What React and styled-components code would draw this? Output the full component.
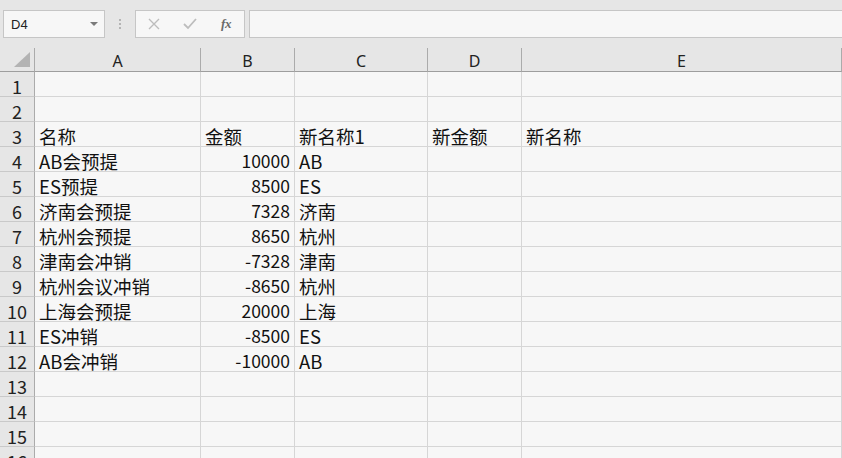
import React from "react";
import styled, { createGlobalStyle } from "styled-components";

const Global = createGlobalStyle`
  html, body { margin: 0; padding: 0; background: #e6e6e6; }
  body { width: 842px; height: 458px; overflow: hidden; font-family: "Noto Sans CJK SC", "Noto Sans", sans-serif; }
  * { box-sizing: border-box; }
`;

const Page = styled.div`
  width: 842px;
  height: 458px;
  overflow: hidden;
  display: flex;
  flex-direction: column;
  background: #e6e6e6;
`;

const Toolbar = styled.div`
  height: 48px;
  flex-shrink: 0;
  display: flex;
  align-items: flex-start;
  padding: 10px 0 0 3px;
`;

const NameBox = styled.div`
  width: 102px;
  height: 28px;
  border: 1px solid #c6c6c6;
  background: #f7f7f7;
  display: flex;
  align-items: center;
  justify-content: space-between;
  padding: 0 6px 0 7px;
  font-family: "Liberation Sans", "Noto Sans", sans-serif;
  font-size: 13px;
  color: #222;
`;

const Caret = styled.span`
  width: 0;
  height: 0;
  border-left: 4px solid transparent;
  border-right: 4px solid transparent;
  border-top: 4px solid #7a7a7a;
`;

const Grip = styled.div`
  width: 30px;
  height: 28px;
  display: flex;
  flex-direction: column;
  align-items: center;
  justify-content: center;
  gap: 2px;
  & > span {
    width: 2px;
    height: 2px;
    background: #b4b4b4;
  }
`;

const Buttons = styled.div`
  width: 110px;
  height: 28px;
  border: 1px solid #c6c6c6;
  background: #f7f7f7;
  display: flex;
  align-items: center;
`;

const IconSlot = styled.div`
  width: 36px;
  height: 26px;
  display: flex;
  align-items: center;
  justify-content: center;
  color: #bdbdbd;
`;

const Fx = styled.span`
  font-family: "Liberation Serif", "DejaVu Serif", serif;
  font-style: italic;
  font-weight: bold;
  font-size: 13px;
  color: #6a6a6a;
  letter-spacing: -0.5px;
`;

const FormulaInput = styled.div`
  margin-left: 4px;
  flex: 1;
  height: 28px;
  border: 1px solid #c6c6c6;
  border-right: none;
  background: #f7f7f7;
`;

const Sheet = styled.div`
  flex: 1;
  min-height: 0;
  display: grid;
  grid-template-columns: 35px 166px 94px 133px 94px 1fr;
  grid-template-rows: 24px;
  grid-auto-rows: 25px;
  background: #f7f7f7;
  overflow: hidden;
`;

const Corner = styled.div`
  background: #e6e6e6;
  border-right: 1px solid #ababab;
  border-bottom: 1px solid #9e9e9e;
  position: relative;
  &::after {
    content: "";
    position: absolute;
    right: 4px;
    bottom: 4px;
    width: 0;
    height: 0;
    border-left: 16px solid transparent;
    border-bottom: 15px solid #b3b3b3;
  }
`;

const ColHead = styled.div`
  background: #e6e6e6;
  border-right: 1px solid #ababab;
  border-bottom: 1px solid #9e9e9e;
  display: flex;
  align-items: center;
  justify-content: center;
  padding-top: 3px;
  font-family: "Noto Sans", sans-serif;
  font-size: 16px;
  color: #222;
`;

const RowHead = styled.div`
  background: #e6e6e6;
  border-right: 1px solid #ababab;
  border-bottom: 1px solid #c9c9c9;
  display: flex;
  align-items: center;
  justify-content: center;
  padding-top: 3px;
  font-size: 18px;
  color: #222;
`;

const Cell = styled.div`
  border-right: 1px solid #d6d6d6;
  border-bottom: 1px solid #d6d6d6;
  display: flex;
  align-items: center;
  justify-content: ${(p) => (p.$num ? "flex-end" : "flex-start")};
  padding: 3px 4px 0 4px;
  font-size: ${(p) => (p.$num ? "17.5px" : "18.5px")};
  color: #111;
  white-space: nowrap;
  overflow: hidden;
`;

const cols = ["A", "B", "C", "D", "E"];

const data = {
  3: ["名称", "金额", "新名称1", "新金额", "新名称"],
  4: ["AB会预提", "10000", "AB"],
  5: ["ES预提", "8500", "ES"],
  6: ["济南会预提", "7328", "济南"],
  7: ["杭州会预提", "8650", "杭州"],
  8: ["津南会冲销", "-7328", "津南"],
  9: ["杭州会议冲销", "-8650", "杭州"],
  10: ["上海会预提", "20000", "上海"],
  11: ["ES冲销", "-8500", "ES"],
  12: ["AB会冲销", "-10000", "AB"],
};

export default function App() {
  const rows = Array.from({ length: 16 }, (_, i) => i + 1);
  return (
    <Page>
      <Global />
      <Toolbar>
        <NameBox>
          <span>D4</span>
          <Caret />
        </NameBox>
        <Grip>
          <span />
          <span />
          <span />
        </Grip>
        <Buttons>
          <IconSlot>
            <svg width="12" height="12" viewBox="0 0 12 12">
              <path d="M1 1 L11 11 M11 1 L1 11" stroke="currentColor" strokeWidth="1.4" fill="none" />
            </svg>
          </IconSlot>
          <IconSlot>
            <svg width="14" height="12" viewBox="0 0 14 12">
              <path d="M1 6 L5 10 L13 1" stroke="currentColor" strokeWidth="1.8" fill="none" />
            </svg>
          </IconSlot>
          <IconSlot>
            <Fx>fx</Fx>
          </IconSlot>
        </Buttons>
        <FormulaInput />
      </Toolbar>
      <Sheet>
        <Corner />
        {cols.map((c) => (
          <ColHead key={c}>{c}</ColHead>
        ))}
        {rows.map((r) => (
          <React.Fragment key={r}>
            <RowHead>{r}</RowHead>
            {cols.map((c, ci) => {
              const v = data[r] ? data[r][ci] : undefined;
              const isNum = ci === 1 && r > 3;
              return (
                <Cell key={c} $num={isNum}>
                  {v !== undefined ? v : ""}
                </Cell>
              );
            })}
          </React.Fragment>
        ))}
      </Sheet>
    </Page>
  );
}
